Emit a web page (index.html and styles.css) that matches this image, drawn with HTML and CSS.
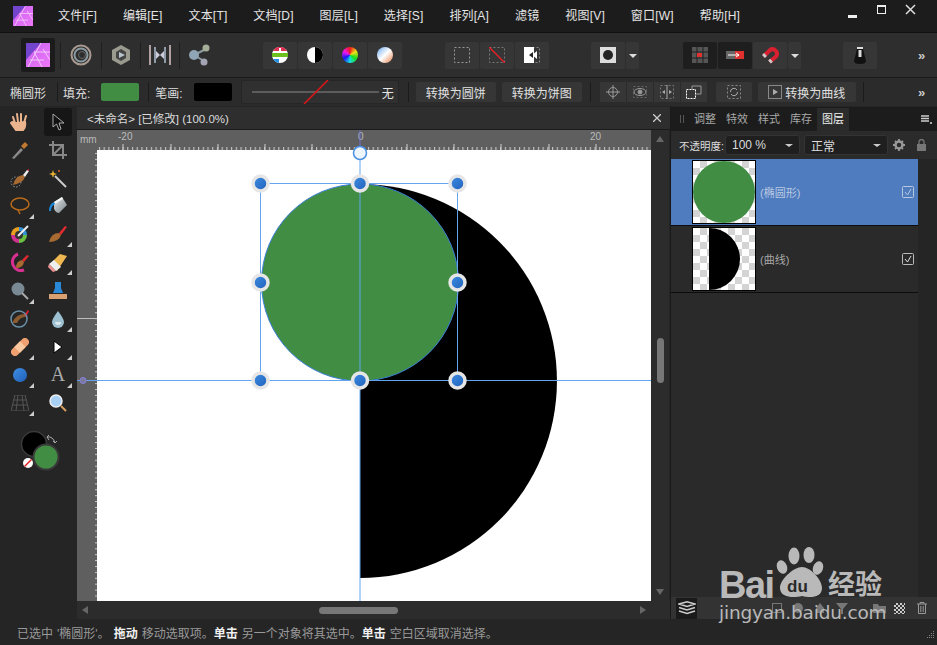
FILE: index.html
```html
<!doctype html>
<html>
<head>
<meta charset="utf-8">
<title>Affinity Designer</title>
<link rel="stylesheet" href="styles.css">
</head>
<body>
<svg class="defs" width="0" height="0">
	<defs>
		<linearGradient id="lg" x1="0" y1="0" x2="1" y2="1"><stop offset="0" stop-color="#c860f0"/><stop offset="1" stop-color="#ee78f8"/></linearGradient>
		<linearGradient id="ball" x1="0" y1="0" x2="1" y2="1"><stop offset="0" stop-color="#3f8fe4"/><stop offset="1" stop-color="#1f5fb8"/></linearGradient>
		<linearGradient id="grad" x1="0" y1="0" x2="1" y2="1"><stop offset="0" stop-color="#6aa8ee"/><stop offset=".5" stop-color="#fff"/><stop offset="1" stop-color="#e8834a"/></linearGradient>
		<linearGradient id="pail" x1="0" y1="0" x2="1" y2="1"><stop offset="0" stop-color="#e4e8ea"/><stop offset="1" stop-color="#788288"/></linearGradient>
		<pattern id="tickx" x="97" y="130" width="4.72" height="20" patternUnits="userSpaceOnUse"><rect x="2" y="17" width="1" height="3" fill="#d0d0d0"/></pattern>
		<pattern id="ticky" x="77" y="150" width="20" height="5.9" patternUnits="userSpaceOnUse"><rect x="18" y="3" width="2" height="1" fill="#c8c8c8"/></pattern>
		<symbol id="logo" viewBox="0 0 24 24">
			<rect width="24" height="24" fill="url(#lg)"/>
			<path d="M0 0H15L0 17Z" fill="#7344cc"/>
			<path d="M15 0L2 24M8 9H24M8 9L16 24M17 6L24 17M4 17H18" stroke="#f4c8fa" stroke-width="1" fill="none"/>
		</symbol>
	</defs>
</svg>
<div class="app">
	<div class="menubar">
		<svg class="menulogo" width="20" height="20"><use href="#logo"/></svg>
		<ul class="menu">
			<li>文件[F]</li><li>编辑[E]</li><li>文本[T]</li><li>文档[D]</li><li>图层[L]</li><li>选择[S]</li><li>排列[A]</li><li>滤镜</li><li>视图[V]</li><li>窗口[W]</li><li>帮助[H]</li>
		</ul>
		<div class="winbtns">
			<svg width="78" height="14" viewBox="0 0 78 14"><rect x="0" y="11" width="9" height="3" fill="#eee"/><rect x="29.500" y="1.500" width="8" height="8" fill="none" stroke="#eee"/><rect x="29" y="1" width="9" height="2" fill="#eee"/><path d="M58 1L67 10M67 1L58 10" stroke="#ddd" stroke-width="1.500"/></svg>
		</div>
	</div>

	<div class="toolbar">
		<div class="persona on"><svg width="24" height="24"><use href="#logo"/></svg></div>
		<div class="persona first"><svg width="22" height="22" viewBox="0 0 22 22" fill="none"><circle cx="11" cy="11" r="9.500" stroke="#a89a90" stroke-width="2"/><circle cx="11" cy="11" r="6.500" stroke="#8a9aa0" stroke-width="2"/><circle cx="12" cy="11" r="3.500" stroke="#666" stroke-width="1"/></svg></div>
		<div class="persona"><svg width="20" height="22" viewBox="0 0 20 22"><path d="M10 1L19 6V16L10 21L1 16V6Z" fill="#9a9a8e"/><path d="M10 5L15 8V14L10 17L5 14V8Z" fill="#444"/><path d="M8 8L14 11L8 14Z" fill="#b8c4cc"/></svg></div>
		<div class="persona"><svg width="22" height="20" viewBox="0 0 22 20"><rect x="0" y="0" width="2" height="20" fill="#b0a0a0"/><rect x="5" y="2" width="2" height="16" fill="#8f9aa8"/><rect x="15" y="2" width="2" height="16" fill="#8f9aa8"/><rect x="20" y="0" width="2" height="20" fill="#b0a0a0"/><path d="M7 6L11 10L7 14ZM15 6L11 10L15 14Z" fill="#ccd"/></svg></div>
		<div class="persona last"><svg width="22" height="22" viewBox="0 0 22 22"><path d="M5 11L17 5M5 11L15 17" stroke="#8a9aa0" stroke-width="2"/><circle cx="5" cy="11" r="5" fill="#8fa4b4"/><circle cx="17" cy="4" r="3.500" fill="#a4ae98"/><circle cx="15" cy="18" r="3.500" fill="#a4a4b4"/></svg></div>

		<div class="group g-color">
			<div class="tbtn"><svg width="16" height="16" viewBox="0 0 16 16"><circle cx="8" cy="8" r="8" fill="#fff"/><path d="M1 4A8 8 0 0 1 15 4H9V1H7V4Z" fill="#e03050"/><rect y="6" width="16" height="4" fill="#6cc020"/><path d="M1 12H7V16A8 8 0 0 1 1 12Z" fill="#2890e0"/></svg></div>
			<div class="tbtn"><svg width="16" height="16" viewBox="0 0 16 16"><circle cx="8" cy="8" r="8" fill="#fff"/><path d="M8 0A8 8 0 0 1 8 16Z" fill="#000"/></svg></div>
			<div class="tbtn"><div class="wheel"></div></div>
			<div class="tbtn"><svg width="16" height="16" viewBox="0 0 16 16"><circle cx="8" cy="8" r="8" fill="url(#grad)"/></svg></div>
		</div>

		<div class="group g-sel">
			<div class="tbtn"><svg width="16" height="16" viewBox="0 0 16 16"><rect x=".5" y=".5" width="15" height="15" fill="none" stroke="#999" stroke-dasharray="2 2"/></svg></div>
			<div class="tbtn"><svg width="16" height="16" viewBox="0 0 16 16"><rect x=".5" y=".5" width="15" height="15" fill="none" stroke="#777" stroke-dasharray="2 2"/><path d="M0 0L16 16" stroke="#e0202a" stroke-width="1.500"/></svg></div>
			<div class="tbtn"><svg width="16" height="16" viewBox="0 0 16 16"><rect x=".5" y=".5" width="15" height="15" fill="none" stroke="#888" stroke-dasharray="2 2"/><path d="M0 0H10V16H0Z" fill="#fff"/><path d="M8 8L13 4V12Z" fill="#fff"/><path d="M5 8L9 5V11Z" fill="#222"/></svg></div>
		</div>

		<div class="group g-mode">
			<div class="tbtn"><svg width="16" height="16" viewBox="0 0 16 16"><rect width="16" height="16" fill="#ddd"/><circle cx="8" cy="8" r="5" fill="#222"/></svg></div>
			<div class="caret"></div>
		</div>

		<div class="group g-snap">
			<div class="tbtn dark"><svg width="16" height="16" viewBox="0 0 16 16"><rect width="16" height="16" fill="#555"/><path d="M5 0V16M11 0V16M0 5H16M0 11H16" stroke="#222"/><rect x="5" y="6" width="5" height="4" fill="#e03030"/></svg></div>
			<div class="tbtn dark"><svg width="18" height="8" viewBox="0 0 18 8"><rect width="9" height="8" fill="#666"/><rect x="9" width="9" height="8" fill="#e03030"/><path d="M2 4H13M10 2L13 4L10 6" stroke="#fff" fill="none"/></svg></div>
			<div class="tbtn"><svg width="18" height="18" viewBox="0 0 18 18" fill="none"><path d="M2.500 10.500L9 4A4.500 4.500 0 0 1 15 10.500L8.500 16" stroke="#d82030" stroke-width="4"/><path d="M2.500 10.500L4.500 8.500M8.500 16L10.500 14.200" stroke="#ccc" stroke-width="4"/></svg></div>
			<div class="caret"></div>
		</div>

		<div class="group g-knob">
			<div class="tbtn"><svg width="12" height="18" viewBox="0 0 12 18"><path d="M3 3H9L12 15Q12 18 6 18Q0 18 0 15Z" fill="#111"/><rect x="3" y="1" width="6" height="2" fill="#ddd"/><rect x="4.500" y="4" width="3" height="7" fill="#ddd"/></svg></div>
		</div>
		<span class="more">»</span>
	</div>

	<div class="contextbar">
		<span class="lbl">椭圆形</span>
		<i class="sep"></i>
		<span class="lbl">填充:</span>
		<div class="swatch green"></div>
		<i class="sep s1"></i>
		<span class="lbl">笔画:</span>
		<div class="swatch black"></div>
		<div class="strokebox">
			<svg width="128" height="24" viewBox="0 0 128 24"><path d="M0 12H127" stroke="#888"/><path d="M52 24L76 0" stroke="#e01414" stroke-width="1.500"/></svg>
			<span>无</span>
		</div>
		<i class="sep s2"></i>
		<div class="cbtn c1">转换为圆饼</div>
		<div class="cbtn c2">转换为饼图</div>
		<i class="sep s3"></i>
		<div class="cbtn icons">
			<span><svg width="14" height="14" viewBox="0 0 14 14" fill="none" stroke="#999"><circle cx="7" cy="7" r="4.500"/><path d="M7 0V14M0 7H14"/></svg></span>
			<span><svg width="16" height="14" viewBox="0 0 16 14" fill="none" stroke="#999"><rect x="1.500" y="1.500" width="13" height="11" stroke="#666" stroke-dasharray="2 2"/><ellipse cx="8" cy="7" rx="6" ry="3.500"/><circle cx="8" cy="7" r="2" fill="#999"/></svg></span>
			<span><svg width="14" height="14" viewBox="0 0 14 14" fill="none" stroke="#777"><rect x=".5" y=".5" width="13" height="13" stroke-dasharray="2 2"/><path d="M7 0V14" stroke="#aaa"/><path d="M2 7L5 5V9ZM12 7L9 5V9Z" fill="#aaa" stroke="none"/></svg></span>
			<span><svg width="16" height="14" viewBox="0 0 16 14" fill="none"><rect x=".5" y="4.500" width="9" height="9" stroke="#fff" stroke-dasharray="2 1"/><path d="M6 4V1H15V9H10" stroke="#999"/></svg></span>
		</div>
		<div class="cbtn c3"><svg width="14" height="14" viewBox="0 0 14 14" fill="none" stroke="#888"><rect x=".5" y=".5" width="13" height="13" stroke-dasharray="2 2"/><path d="M3.500 7A3.500 3.500 0 0 1 10 5M10.500 7A3.500 3.500 0 0 1 4 9" stroke="#aaa"/></svg></div>
		<div class="cbtn c4"><svg width="14" height="14" viewBox="0 0 14 14" fill="none" stroke="#888"><rect x=".5" y=".5" width="13" height="13"/><path d="M5 4L10 7L5 10Z" fill="#aaa" stroke="none"/></svg>转换为曲线</div>
		<i class="sep s4"></i>
		<span class="more">»</span>
	</div>

	<div class="main">
		<div class="toolbox">
			<div class="tool"><svg width="20" height="20" viewBox="0 0 20 20"><path d="M5 11L3 5M8 10L7 2M11 10V2M14 11L16 4M5 11Q2 9 1 11L6 18H13Q16 15 15 10Z" fill="#eab48e" stroke="#eab48e" stroke-width="2" stroke-linecap="round"/></svg></div>
			<div class="tool sel"><svg width="14" height="18" viewBox="0 0 14 18"><path d="M2 1V14L5.500 11L8 17L10 16L8 10H13Z" fill="#111" stroke="#aaa"/></svg></div>
			<div class="tool"><svg width="20" height="20" viewBox="0 0 20 20"><path d="M2 18L11 8L13 10L4 19Z" fill="#8a8a8a"/><path d="M11 6L14 9L18 5L15 2Z" fill="#c07a30"/></svg></div>
			<div class="tool"><svg width="18" height="18" viewBox="0 0 18 18" fill="none" stroke="#888" stroke-width="2"><path d="M4 0V14H18M0 4H14V18"/><path d="M4 14L14 4"/></svg></div>
			<div class="tool"><svg width="20" height="20" viewBox="0 0 20 20"><circle cx="6" cy="14" r="5" fill="none" stroke="#999" stroke-dasharray="1.500 1.500"/><path d="M3 17Q5 8 13 7L15 9Q13 15 3 17Z" fill="#a86a30"/><path d="M13 7L17 2L19 3L15 9Z" fill="#eee"/><path d="M17 2L19 1V3Z" fill="#e02030"/></svg></div>
			<div class="tool"><svg width="20" height="20" viewBox="0 0 20 20"><path d="M7 8L18 19" stroke="#ccc" stroke-width="2"/><path d="M5 2L6 5L9 6L6 7L5 10L4 7L1 6L4 5Z" fill="#e8b030"/><circle cx="11" cy="3" r="1" fill="#e06020"/></svg></div>
			<div class="tool more-t"><svg width="20" height="20" viewBox="0 0 20 20" fill="none" stroke="#b86a18" stroke-width="1.500"><ellipse cx="10" cy="8" rx="9" ry="6"/><path d="M8 14L10 18"/></svg></div>
			<div class="tool"><svg width="20" height="20" viewBox="0 0 20 20"><path d="M6 6L14 1L19 9L11 17Q8 17 6 13Z" fill="url(#pail)"/><path d="M6 6L14 1L15 3L7 8Z" fill="#f4f6f7"/><path d="M6 6Q1 8 1 15L3 15Q3 10 7 8Z" fill="#1a88d8"/></svg></div>
			<div class="tool"><svg width="18" height="18" viewBox="0 0 18 18"><path d="M0 10A8 8 0 0 1 8 2V10Z" fill="#e8a020"/><path d="M8 2A8 8 0 0 1 16 10H8Z" fill="#3090d8"/><path d="M16 10A8 8 0 0 1 8 18V10Z" fill="#6ac040"/><path d="M8 18A8 8 0 0 1 0 10H8Z" fill="#d03090"/><circle cx="8" cy="10" r="4" fill="#333"/><path d="M7 11L17 1" stroke="#eee" stroke-width="2"/></svg></div>
			<div class="tool more-t"><svg width="20" height="20" viewBox="0 0 20 20"><path d="M1 18Q3 9 11 9L13 11Q11 18 1 18Z" fill="#a86a30"/><path d="M11 9L17 2L19 3L13 11Z" fill="#e02a30"/></svg></div>
			<div class="tool"><svg width="20" height="20" viewBox="0 0 20 20" fill="none"><path d="M8 2A8 8 0 1 0 14 18" stroke="#d83090" stroke-width="3"/><path d="M6 16Q6 9 12 8L14 10Q13 16 6 16Z" fill="#a86a30"/><path d="M12 8L17 3L19 4L14 10Z" fill="#e02a30"/></svg></div>
			<div class="tool more-t"><svg width="20" height="20" viewBox="0 0 20 20"><path d="M2 12L12 2L19 4L9 19Z" fill="#f0b850"/><path d="M1 12L8 19L5 20L0 15Z" fill="#f09090"/><path d="M1 12L6 8L13 15L8 19Z" fill="#eee"/></svg></div>
			<div class="tool more-t"><svg width="20" height="20" viewBox="0 0 20 20"><circle cx="8" cy="8" r="6.500" fill="#7a8a94"/><path d="M12 12L18 18" stroke="#aaa" stroke-width="2"/></svg></div>
			<div class="tool"><svg width="20" height="20" viewBox="0 0 20 20"><path d="M7 1H13V7L15 12H5L7 7Z" fill="#2a88d8"/><path d="M1 13H19V18H1Z" fill="#d8a070"/></svg></div>
			<div class="tool"><svg width="20" height="20" viewBox="0 0 20 20" fill="none"><path d="M2 14Q6 4 17 5L15 8Q10 8 7 14" fill="#8a5a30"/><path d="M14 6L18 1L19 2L16 8Z" fill="#e02030"/><circle cx="9" cy="10" r="8" stroke="#6a90a8" stroke-width="1.500"/></svg></div>
			<div class="tool more-t"><svg width="14" height="18" viewBox="0 0 14 18"><path d="M7 1Q13 9 13 12A6 6 0 0 1 1 12Q1 9 7 1Z" fill="#9cc0d0"/><path d="M4 12A3 3 0 0 0 10 12Z" fill="#dbe8ee"/></svg></div>
			<div class="tool more-t"><svg width="18" height="18" viewBox="0 0 18 18"><g transform="rotate(-45 9 9)"><rect x="-2" y="5" width="22" height="8" rx="4" fill="#f0a070"/><rect x="5" y="5" width="8" height="8" fill="#f8c8a0"/></g></svg></div>
			<div class="tool more-t"><svg width="10" height="14" viewBox="0 0 10 14"><path d="M1 1V13L9 7Z" fill="#fff" stroke="#000"/></svg></div>
			<div class="tool more-t"><svg width="16" height="16" viewBox="0 0 16 16"><circle cx="8" cy="8" r="7" fill="url(#ball)"/></svg></div>
			<div class="tool more-t"><span class="tool-a">A</span></div>
			<div class="tool more-t"><svg width="18" height="16" viewBox="0 0 18 16" fill="none" stroke="#555"><path d="M4 0H14L18 16H0ZM2 5H16M1 10H17M7 0L5 16M11 0L13 16"/></svg></div>
			<div class="tool"><svg width="20" height="20" viewBox="0 0 20 20"><circle cx="8" cy="8" r="6" fill="#a8d0f4" stroke="#eee" stroke-width="1.500"/><path d="M13 13L18 18" stroke="#d8a060" stroke-width="2"/></svg></div>
			<svg class="colors" width="50" height="46" viewBox="0 0 50 46">
				<circle cx="15" cy="15" r="12.500" fill="#000" stroke="#3a3a3a" stroke-width="1.500"/>
				<circle cx="27" cy="28" r="12.500" fill="#428d44" stroke="#3a3a3a" stroke-width="2"/>
				<circle cx="9" cy="34" r="5" fill="#fff"/>
				<path d="M5.500 37.500L12.500 30.500" stroke="#e02020" stroke-width="1.500"/>
				<path d="M28 8Q34 7 36 14M28 8L30 6M28 8L30 11M36 14L34 12M36 14L38 12" stroke="#aaa" fill="none"/>
			</svg>
		</div>

		<div class="docarea">
			<div class="doctab">
				<span>&lt;未命名&gt; [已修改] (100.0%)</span>
				<svg width="8" height="8" viewBox="0 0 8 8"><path d="M0 0L8 8M8 0L0 8" stroke="#ccc" stroke-width="1.300"/></svg>
			</div>
			<div class="viewrow">
				<svg class="view" width="574" height="471" viewBox="77 130 574 471">
					<rect x="77" y="130" width="574" height="471" fill="#5f5f5f"/>
					<rect x="97" y="130" width="554" height="20" fill="url(#tickx)"/>
					<rect x="77" y="150" width="20" height="451" fill="url(#ticky)"/>
					<path d="M123 144V150M171 144V150M218 144V150M265 144V150M312 144V150M407 144V150M454 144V150M501 144V150M549 144V150M596 144V150" stroke="#d0d0d0"/>
					<path d="M77 318.500H97" stroke="#bdbdbd"/>
					<text class="rul" x="80" y="143">mm</text>
					<text class="rul" x="118" y="140">-20</text>
					<text class="rul" x="358" y="140">0</text>
					<text class="rul" x="590" y="140">20</text>
					<rect x="97" y="150" width="554" height="451" fill="#fff"/>
					<path d="M360 184A197 197 0 0 1 360 578Z" fill="#000"/>
					<circle cx="360" cy="282.500" r="98.500" fill="#428d44" stroke="#3a80d8"/>
					<g stroke="#64a4ec" fill="none">
						<rect x="260.500" y="183.500" width="197" height="197"/>
						<path d="M77 380.500H651"/>
						<path d="M360 150V601"/>
						<path d="M360 130V150" stroke="#7070d0"/>
					</g>
					<circle cx="83" cy="380.500" r="3" fill="#7a7a9a" stroke="#8a80e0"/>
					<circle cx="360" cy="153" r="6.500" fill="#eef5fc" stroke="#4a90e2" stroke-width="1.500"/>
					<g class="handles" fill="url(#ball)" stroke="#e6e6e6" stroke-width="3.500">
						<circle cx="260.500" cy="183.500" r="7.500"/>
						<circle cx="360" cy="183.500" r="7.500"/>
						<circle cx="457.500" cy="183.500" r="7.500"/>
						<circle cx="260.500" cy="282.500" r="7.500"/>
						<circle cx="457.500" cy="282.500" r="7.500"/>
						<circle cx="260.500" cy="380.500" r="7.500"/>
						<circle cx="360" cy="380.500" r="7.500"/>
						<circle cx="457.500" cy="380.500" r="7.500"/>
					</g>
				</svg>
				<div class="vscroll">
					<i class="arr up"></i>
					<i class="thumb-v"></i>
					<i class="arr down"></i>
				</div>
			</div>
			<div class="hscroll">
				<i class="arr left"></i>
				<i class="thumb-h"></i>
				<i class="arr right"></i>
			</div>
		</div>

		<div class="panel">
			<div class="ptabs">
				<i class="grip"></i>
				<span>调整</span><span>特效</span><span>样式</span><span>库存</span><span class="on">图层</span>
				<svg class="pmenu" width="11" height="9" viewBox="0 0 11 9"><path d="M0 1H8M0 3.500H8M0 6H8" stroke="#ccc" stroke-width="1.500"/><rect x="9" y="7" width="2" height="2" fill="#aaa"/></svg>
			</div>
			<div class="popts">
				<span class="oplbl">不透明度:</span>
				<div class="drop d1">100 %<i></i></div>
				<div class="drop d2">正常<i></i></div>
				<svg width="12" height="12" viewBox="0 0 12 12"><circle cx="6" cy="6" r="3.500" fill="none" stroke="#999" stroke-width="2.500"/><path d="M6 0V12M0 6H12M2 2L10 10M10 2L2 10" stroke="#999" stroke-width="1.800" stroke-dasharray="2 8"/></svg>
				<svg class="lock" width="9" height="12" viewBox="0 0 9 12"><rect y="5" width="9" height="7" fill="#777"/><path d="M2 5V3A2.500 2.500 0 0 1 7 3V5" fill="none" stroke="#777" stroke-width="1.300"/></svg>
			</div>
			<div class="pbody">
				<div class="layers">
					<div class="layer active">
						<div class="thumb"><svg width="62" height="62" viewBox="0 0 62 62"><circle cx="31" cy="31" r="31" fill="#428d44"/></svg></div>
						<span class="lname">(椭圆形)</span>
						<svg class="check" width="12" height="12" viewBox="0 0 12 12" fill="none"><rect x=".5" y=".5" width="11" height="11" rx="1" stroke="#b8c8e0"/><path d="M3 6L5.500 9L9 3" stroke="#b8c8e0"/></svg>
					</div>
					<div class="layer">
						<div class="thumb"><svg width="62" height="62" viewBox="0 0 62 62"><path d="M16 0A31 31 0 0 1 16 62Z" fill="#000"/></svg></div>
						<span class="lname">(曲线)</span>
						<svg class="check" width="12" height="12" viewBox="0 0 12 12" fill="none"><rect x=".5" y=".5" width="11" height="11" rx="1" stroke="#bbb"/><path d="M3 6L5.500 9L9 3" stroke="#ddd"/></svg>
					</div>
				</div>
				<div class="pside"></div>
			</div>
			<div class="pbottom">
				<div class="layersbtn"><svg width="18" height="14" viewBox="0 0 18 14" fill="none" stroke="#ccc" stroke-width="1.500"><path d="M1 3L9 0.800L17 3L9 5.500ZM1 6.500L9 9L17 6.500M1 10L9 12.500L17 10"/></svg></div>
				<svg class="b-mid" width="76" height="12" viewBox="0 0 76 12" fill="#777"><rect x=".5" y="1.500" width="9" height="9" fill="none" stroke="#777"/><circle cx="26" cy="6" r="5"/><path d="M48 1L52 6V11H44V6Z"/><path d="M64 1H76L71 7V12H69V7Z"/></svg>
				<svg class="b-folder" width="13" height="9" viewBox="0 0 13 9"><path d="M0 0H5L6 2H13V9H0Z" fill="#777"/></svg>
				<div class="b-check"></div>
				<svg class="b-trash" width="10" height="12" viewBox="0 0 10 12" fill="none" stroke="#999"><path d="M0 2H10M3 2V.5H7V2M1.500 2V11.500H8.500V2M3.800 4V10M6.200 4V10"/></svg>
			</div>
		</div>
	</div>

	<div class="status">
		<span>已选中 '椭圆形'。 <b>拖动</b> 移动选取项。<b>单击</b> 另一个对象将其选中。<b>单击</b> 空白区域取消选择。</span>
		<svg class="rgrip" width="8" height="8" viewBox="0 0 8 8" fill="#888"><rect x="6" y="0" width="1" height="1"/><rect x="4" y="2" width="1" height="1"/><rect x="6" y="2" width="1" height="1"/><rect x="2" y="4" width="1" height="1"/><rect x="4" y="4" width="1" height="1"/><rect x="6" y="4" width="1" height="1"/><rect x="0" y="6" width="1" height="1"/><rect x="2" y="6" width="1" height="1"/><rect x="4" y="6" width="1" height="1"/><rect x="6" y="6" width="1" height="1"/></svg>
	</div>

	<div class="mark">
		<svg class="paw" width="50" height="54" viewBox="0 0 50 54" fill="#b9b9b9">
			<ellipse cx="6" cy="22" rx="5" ry="7" transform="rotate(-20 6 22)"/>
			<ellipse cx="18" cy="11" rx="5.500" ry="8.500"/>
			<ellipse cx="33" cy="10" rx="5.500" ry="8"/>
			<ellipse cx="42" cy="23" rx="5" ry="7" transform="rotate(20 42 23)"/>
			<path d="M26 22C34 22 46 34 46 43C46 53 34 53 26 51C18 53 4 53 4 43C4 34 18 22 26 22Z"/>
		</svg>
		<span class="m-bai">Bai</span>
		<span class="m-du">du</span>
		<span class="m-jy">经验</span>
		<span class="m-url">jingyan.baidu.com</span>
	</div>
</div>
</body>
</html>
```

FILE: styles.css
```css
*{box-sizing:border-box;}
html,body{margin:0;padding:0;overflow:hidden;background:#252525;}
ul{margin:0;padding:0;list-style:none;}
i{display:block;font-style:normal;}
svg{display:block;}
.defs{position:absolute;}
.app{position:relative;width:937px;height:645px;display:flex;flex-direction:column;font-family:"Liberation Sans","Noto Sans CJK SC",sans-serif;font-size:12px;color:#e4e4e4;background:#252525;overflow:hidden;}

/* menu */
.menubar{height:33px;background:#1c1c1c;display:flex;align-items:center;padding-left:13px;border-bottom:1px solid #111;}
.menu{display:flex;gap:25.900px;margin-left:25px;letter-spacing:.2px;}
.menu li{white-space:nowrap;line-height:18px;}
.winbtns{margin-left:auto;margin-right:11px;margin-top:-10px;}

/* top toolbar */
.toolbar{height:45px;background:#2e2e2e;display:flex;align-items:center;border-bottom:1px solid #1a1a1a;position:relative;}
.persona{width:39px;height:27px;display:flex;align-items:center;justify-content:center;border-right:1px solid #1f1f1f;}
.persona.on{width:34px;height:34px;background:#1b1b1b;border:0;border-radius:2px;margin-left:21px;margin-right:5px;}
.persona.first{width:42px;border-left:1px solid #1f1f1f;}
.persona.last{border:0;}
.group{display:flex;gap:1px;height:27px;}
.tbtn{width:34px;height:27px;background:#363636;display:flex;align-items:center;justify-content:center;border-radius:2px;}
.tbtn.dark{background:#1e1e1e;}
.caret{width:13px;height:27px;background:#363636;border-radius:2px;position:relative;}
.caret::after{content:"";position:absolute;left:3px;top:12px;border:4px solid transparent;border-top:4px solid #ddd;border-bottom:0;}
.wheel{width:16px;height:16px;border-radius:50%;background:conic-gradient(#f01818,#f0e018,#18e018,#18e0e0,#1818f0,#f018f0,#f01818);}
.g-color{margin-left:44px;}
.g-sel{margin-left:43px;}
.g-mode{margin-left:42px;}
.g-snap{margin-left:44px;}
.g-knob{margin-left:42px;}
.more{color:#ccc;font-size:13px;font-weight:bold;position:absolute;left:918px;}

/* context bar */
.contextbar{height:28px;background:#2b2b2b;display:flex;align-items:center;padding-left:10px;position:relative;}
.lbl{white-space:nowrap;color:#ddd;}
.sep{width:1px;height:20px;background:#1b1b1b;margin:0 5px 0 11px;}
.s1{margin:0 6px 0 0;}
.swatch{width:38px;height:18px;border-radius:2px;margin:0 9px 0 11px;}
.swatch.green{background:#428d44;}
.swatch.black{background:#000;margin-right:9px;}
.strokebox{width:158px;height:24px;background:#303030;border:1px solid #262626;border-radius:2px;display:flex;align-items:center;padding-left:10px;gap:2px;}
.s2{margin:0 7px 0 9px;}
.s3{margin:0 9px 0 8px;}
.s4{margin:0 0 0 7px;}
.cbtn{height:20px;background:#363636;border-radius:2px;display:flex;align-items:center;justify-content:center;color:#e0e0e0;white-space:nowrap;}
.c1{width:80px;margin-right:6px;}
.c2{width:80px;}
.c3{width:36px;margin-left:9px;}
.c4{width:98px;margin-left:6px;gap:3px;}
.icons{width:107px;background:none;gap:1px;}
.icons span{width:26px;height:20px;background:#363636;display:flex;align-items:center;justify-content:center;}

/* main */
.main{height:513px;display:flex;}
.toolbox{width:77px;background:#252525;display:grid;grid-template-columns:28px 28px;grid-auto-rows:28.100px;column-gap:10px;padding:2px 0 0 6px;position:relative;}
.tool{height:28px;display:flex;align-items:center;justify-content:center;position:relative;}
.tool.sel{background:#161616;border-radius:3px;}
.more-t::after{content:"";position:absolute;right:0;bottom:1px;border-left:5px solid transparent;border-bottom:5px solid #ccc;}
.tool-a{font-family:"Liberation Serif",serif;font-size:20px;color:#aaa;}
.colors{grid-column:1 / 3;margin:12px 0 0 13px;}

.docarea{width:593px;display:flex;flex-direction:column;}
.doctab{height:24px;background:#2e2e2e;border-bottom:1px solid #1a1a1a;margin-top:1px;padding:0 9px 0 10px;display:flex;align-items:center;justify-content:space-between;font-size:11.500px;color:#ddd;}
.viewrow{display:flex;height:471px;}
.view .rul{font-size:10px;fill:#bbb;font-family:"Liberation Sans",sans-serif;}
.vscroll{width:18px;background:#2c2c2c;position:relative;}
.hscroll{height:18px;background:#2c2c2c;position:relative;}
.thumb-v{position:absolute;left:6px;top:208px;width:7px;height:45px;background:#777;border-radius:4px;}
.thumb-h{position:absolute;left:242px;top:6px;width:79px;height:7px;background:#777;border-radius:4px;}
.arr{position:absolute;width:0;height:0;}
.up{left:5px;top:6px;border:4px solid transparent;border-bottom:6px solid #666;border-top:0;}
.down{left:5px;bottom:6px;border:4px solid transparent;border-top:6px solid #666;border-bottom:0;}
.left{left:5px;top:5px;border:4px solid transparent;border-right:6px solid #666;border-left:0;}
.right{right:24px;top:5px;border:4px solid transparent;border-left:6px solid #666;border-right:0;}

/* right panel */
.panel{flex:1;background:#252525;display:flex;flex-direction:column;border-left:1px solid #1a1a1a;}
.ptabs{height:24px;margin-top:1px;background:#1c1c1c;display:flex;align-items:center;position:relative;padding-left:18px;font-size:11px;color:#a8a8a8;}
.ptabs span{width:32px;height:23px;line-height:23px;text-align:center;}
.ptabs .on{background:#2b2b2b;color:#f0f0f0;}
.grip{position:absolute;left:9px;top:8px;width:4px;height:8px;border-left:1px solid #555;border-right:1px solid #555;}
.pmenu{position:absolute;right:5px;top:8px;}
.popts{height:28px;background:#2b2b2b;display:flex;align-items:center;padding-left:8px;}
.oplbl{font-size:10.500px;width:46px;white-space:nowrap;color:#ddd;}
.drop{height:20px;background:#1f1f1f;border:1px solid #333;border-radius:3px;display:flex;align-items:center;padding-left:6px;position:relative;color:#ddd;}
.drop i{position:absolute;right:6px;top:8px;border:4px solid transparent;border-top:3px solid #ccc;border-bottom:0;}
.d1{width:75px;margin-right:4px;}
.d2{width:84px;margin-right:5px;}
.lock{margin-left:12px;}
.pbody{flex:1;display:flex;background:#2a2a2a;}
.layers{width:247px;}
.pside{flex:1;background:#252525;}
.layer{height:67px;display:flex;align-items:center;padding-left:21px;border-bottom:1px solid #0c0c0c;position:relative;background:#2a2a2a;color:#a8a8a8;font-size:11px;}
.layer.active{background:#4f7bbf;color:#b8c8e0;}
.thumb{width:64px;height:64px;border:1px solid #000;background-color:#fff;background-image:conic-gradient(#d4d4d4 25%,#fff 0 50%,#d4d4d4 0 75%,#fff 0);background-size:14px 14px;}
.lname{margin-left:4px;}
.check{margin-left:auto;margin-right:4px;}
.pbottom{height:22px;background:#333;display:flex;align-items:center;position:relative;}
.layersbtn{width:21px;height:21px;margin-left:5px;background:#1a1a1a;display:flex;align-items:center;justify-content:center;}
.b-mid{margin-left:75px;}
.b-folder{margin-left:25px;}
.b-check{width:11px;height:11px;margin-left:8px;background-image:conic-gradient(#ccc 25%,#333 0 50%,#ccc 0 75%,#333 0);background-size:4px 4px;}
.b-trash{margin-left:12px;}

/* status */
.status{height:26px;background:#252525;display:flex;align-items:center;padding-left:17px;color:#999;position:relative;white-space:nowrap;word-spacing:.7px;}
.status b{color:#f0f0f0;}
.rgrip{position:absolute;right:2px;bottom:6px;}

/* baidu watermark lies over the panel */
.mark{position:absolute;left:718px;top:545px;width:170px;height:82px;color:#b9b9b9;}
.paw{position:absolute;left:58px;top:0;}
.m-bai{position:absolute;left:1px;top:21px;font:bold 38px/38px "Liberation Sans",sans-serif;letter-spacing:-1.500px;}
.m-du{position:absolute;left:69px;top:33px;font:bold 17px/18px "Liberation Sans",sans-serif;color:#2a2a2a;}
.m-jy{position:absolute;left:110px;top:22px;font:bold 27px/32px "Noto Sans CJK SC",sans-serif;}
.m-url{position:absolute;left:1px;top:55px;font:18.500px/26px "DejaVu Sans",sans-serif;letter-spacing:-.2px;white-space:nowrap;}
```
